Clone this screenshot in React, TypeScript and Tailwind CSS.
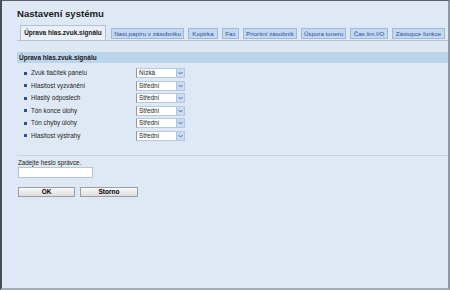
import React from "react";

const TABS = [
  { label: "Nast.papíru v zásobníku", w: "w-[73px]" },
  { label: "Kopírka", w: "w-[30px]" },
  { label: "Fax", w: "w-[17px]" },
  { label: "Prioritní zásobník", w: "w-[54px]" },
  { label: "Úspora toneru", w: "w-[45px]" },
  { label: "Čas.lim.I/O", w: "w-[38px]" },
  { label: "Zástupce funkce", w: "w-[53px]" },
];

const ROWS = [
  { label: "Zvuk tlačítek panelu", value: "Nízká" },
  { label: "Hlasitost vyzvánění", value: "Střední" },
  { label: "Hlasitý odposlech", value: "Střední" },
  { label: "Tón konce úlohy", value: "Střední" },
  { label: "Tón chyby úlohy", value: "Střední" },
  { label: "Hlasitost výstrahy", value: "Střední" },
];

function Select({ value }: { value: string }) {
  return (
    <div className="flex items-stretch h-[10px] w-[49px] bg-white border border-[#b8c8dc] border-l-[#8899aa] border-l-dotted">
      <span className="flex-1 pl-[2px] text-[6.3px] leading-[8px] text-[#222]">{value}</span>
      <span className="w-[8px] bg-[#c9dbf6] border-l border-[#b0c4e0] flex items-center justify-center">
        <svg width="5" height="4" viewBox="0 0 5 4">
          <path d="M0.5 1 L2.5 3 L4.5 1" fill="none" stroke="#4a6aa8" strokeWidth="1" />
        </svg>
      </span>
    </div>
  );
}

export default function App() {
  return (
    <div
      className="w-[450px] h-[290px] overflow-hidden bg-[#dfe9f5] border-l-2 border-l-[#4a4d52] border-t border-t-[#5a5d62] border-r-2 border-r-[#8e98a6] border-b-2 border-b-[#a3acb8] flex flex-col"
      style={{ fontFamily: "'Liberation Sans', Arial, sans-serif" }}
    >
      {/* titulek */}
      <h1 className="pl-[15px] pt-[6px] h-[25px] text-[9.6px] font-bold text-[#1a1a1a] leading-[13px]">
        Nastavení systému
      </h1>

      {/* záložky */}
      <div className="ml-[15px] flex items-end h-[15px] border-b border-[#b4c2d2]">
        <div className="ml-[3px] w-[86px] h-[15px] bg-[#e9f0f8] border border-b-0 border-[#b4c2d2] flex items-center justify-center text-[6.5px] font-bold text-[#1a1a1a]">
          Úprava hlas.zvuk.signálu
        </div>
        <div className="flex items-end gap-[4px] ml-[5px] mb-[1px]">
          {TABS.map((t) => (
            <div
              key={t.label}
              className={`${t.w} h-[11px] bg-[#c4d8f0] border border-[#9fbadb] flex items-center justify-center text-[6.2px] text-[#2d4f9a] whitespace-nowrap`}
            >
              {t.label}
            </div>
          ))}
        </div>
      </div>

      {/* sekce */}
      <div className="ml-[15px] mt-[11px] h-[11px] bg-[#bdd5ec] flex items-center pl-[2px] text-[6.5px] font-bold text-[#1a1a1a]">
        Úprava hlas.zvuk.signálu
      </div>

      <div className="ml-[15px] mt-[5px] flex flex-col gap-[2.5px]">
        {ROWS.map((r) => (
          <div key={r.label} className="flex items-center h-[10px]">
            <span className="ml-[7px] w-[3px] h-[3px] bg-[#2f4f8f]" />
            <span className="ml-[4px] w-[105px] text-[6.3px] text-[#222]">{r.label}</span>
            <Select value={r.value} />
          </div>
        ))}
      </div>

      <div className="ml-[15px] mt-[14px] border-t border-[#c6d3e2]" />

      {/* heslo */}
      <div className="ml-[16px] mt-[3px] flex flex-col">
        <span className="text-[6.3px] leading-[7px] text-[#222]">Zadejte heslo správce.</span>
        <div className="mt-[1px] w-[75px] h-[11px] bg-white border border-[#b4c4d6]" />
        <div className="mt-[9px] flex gap-[5px]">
          <button className="w-[57px] h-[10px] bg-gradient-to-b from-[#fafafa] to-[#dcdcdc] border border-[#9aa0a8] text-[6.5px] font-bold leading-[8px] text-black">
            OK
          </button>
          <button className="w-[58px] h-[10px] bg-gradient-to-b from-[#fafafa] to-[#dcdcdc] border border-[#9aa0a8] text-[6.5px] font-bold leading-[8px] text-black">
            Storno
          </button>
        </div>
      </div>
    </div>
  );
}
